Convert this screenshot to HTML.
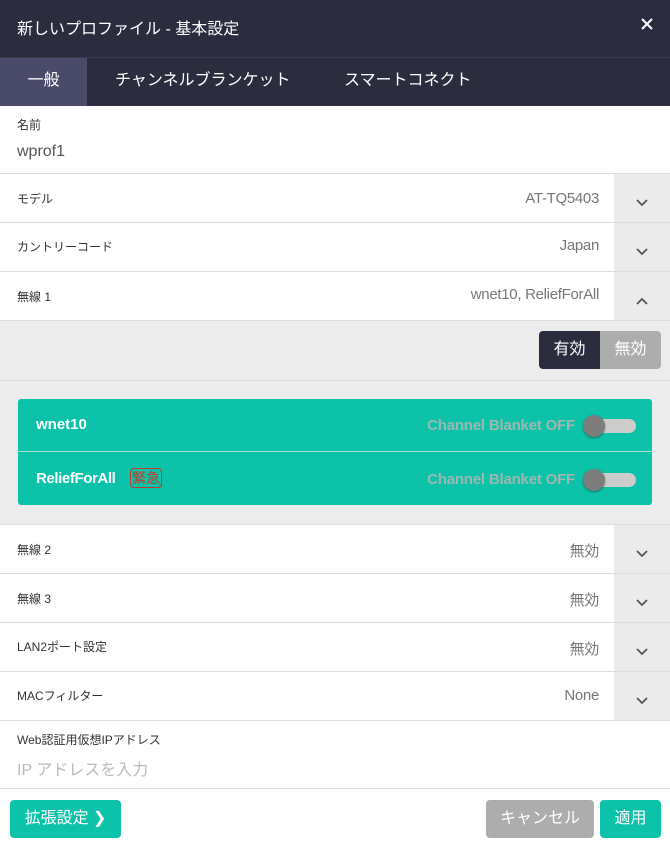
<!DOCTYPE html>
<html><head><meta charset="utf-8"><style>
*{box-sizing:border-box;margin:0;padding:0}
body{width:670px;height:849px;overflow:hidden;background:#fff;font-family:"Liberation Sans","Noto Sans CJK JP",sans-serif;position:relative}
.hdr{position:absolute;left:0;top:0;width:670px;height:57px;background:#2b2c3e;color:#fff;font-size:16px;padding:15px 0 0 17px}
.x{position:absolute;right:17px;top:17px}
.tabs{position:absolute;left:0;top:57px;width:670px;height:49px;background:#2b2c3e;border-top:1px solid #3a3b50}
.tab{position:absolute;top:0;height:49px;color:#fff;font-size:16px;line-height:46px}
.row{position:absolute;left:0;width:670px;border-bottom:1px solid #ddd;background:#fff}
.lbl{position:absolute;left:17px;font-size:12px;color:#333}
.val{position:absolute;right:71px;font-size:15px;color:#777;letter-spacing:-0.3px}
.chev{position:absolute;right:0;top:0;width:56px;height:100%;background:#ebebeb}
.chev svg{position:absolute;left:22px;top:25px}
.btn{position:absolute;height:38px;border-radius:4px;color:#fff;font-size:16px;line-height:38px;text-align:center}
.tog{position:absolute;right:16px;width:50px;height:14px;border-radius:7px;background:#ccc}
.tog:before{content:"";position:absolute;left:-3px;top:-4px;width:22px;height:22px;border-radius:50%;background:#7d7d7d;box-shadow:0 1px 2px rgba(0,0,0,.4)}
.cb{position:absolute;right:77px;font-size:15px;color:#9cb8b0;font-weight:bold;letter-spacing:-0.2px}
</style></head><body>
<div class="hdr">新しいプロファイル - 基本設定<span class="x"><svg width="12" height="12"><path d="M1 1l10 10M11 1L1 11" stroke="#fff" stroke-width="2"/></svg></span></div>
<div class="tabs">
<div class="tab" style="left:0;width:87px;background:#4a4b6a;text-align:center">一般</div>
<div class="tab" style="left:115px">チャンネルブランケット</div>
<div class="tab" style="left:344px">スマートコネクト</div>
</div>
<div class="row" style="top:106px;height:68px"><span class="lbl" style="top:10px">名前</span><span style="position:absolute;left:17px;top:37px;font-size:16px;color:#555">wprof1</span></div>

<div class="row" style="top:174px;height:49px"><span class="lbl" style="top:16px">モデル</span><span class="val" style="top:16px">AT-TQ5403</span><div class="chev"><svg width="12" height="8"><path d="M1 1l5 5 5-5" stroke="#555" stroke-width="1.8" fill="none"/></svg></div></div>
<div class="row" style="top:223px;height:49px"><span class="lbl" style="top:15px">カントリーコード</span><span class="val" style="top:14px">Japan</span><div class="chev"><svg width="12" height="8"><path d="M1 1l5 5 5-5" stroke="#555" stroke-width="1.8" fill="none"/></svg></div></div>
<div class="row" style="top:272px;height:49px"><span class="lbl" style="top:16px">無線 1</span><span class="val" style="top:14px">wnet10, ReliefForAll</span><div class="chev"><svg width="12" height="8"><path d="M1 7l5-5 5 5" stroke="#555" stroke-width="1.8" fill="none"/></svg></div></div>

<div style="position:absolute;top:321px;left:0;width:670px;height:60px;background:#ececec;border-bottom:1px solid #ddd"></div>
<div style="position:absolute;left:539px;top:331px;width:61px;height:38px;background:#2b2c3e;color:#fff;font-size:16px;line-height:38px;text-align:center;border-radius:4px 0 0 4px">有効</div>
<div style="position:absolute;left:600px;top:331px;width:61px;height:38px;background:#adadad;color:#fff;font-size:16px;line-height:38px;text-align:center;border-radius:0 4px 4px 0">無効</div>
<div style="position:absolute;top:381px;left:0;width:670px;height:144px;background:#ececec;border-bottom:1px solid #ddd"></div>
<div style="position:absolute;left:18px;top:399px;width:634px;height:106px;background:#0cc2a9;border-radius:3px">
 <div style="position:absolute;left:0;top:0;width:634px;height:53px;border-bottom:1px solid #a8e0d6">
  <span style="position:absolute;left:18px;top:17px;color:#fff;font-weight:bold;font-size:15px">wnet10</span>
  <span class="cb" style="top:18px">Channel Blanket OFF</span><div class="tog" style="top:20px"></div></div>
 <span style="position:absolute;left:18px;top:71px;color:#fff;font-weight:bold;font-size:15px;letter-spacing:-0.4px">ReliefForAll</span>
 <span style="position:absolute;left:112px;top:69px;border:1px solid #c0392b;border-radius:4px;color:#c0392b;font-size:14px;line-height:18px;padding:0 1px">緊急</span>
 <span class="cb" style="top:72px">Channel Blanket OFF</span><div class="tog" style="top:74px"></div>
</div>

<div class="row" style="top:525px;height:49px"><span class="lbl" style="top:16px">無線 2</span><span class="val" style="top:15px">無効</span><div class="chev"><svg width="12" height="8"><path d="M1 1l5 5 5-5" stroke="#555" stroke-width="1.8" fill="none"/></svg></div></div>
<div class="row" style="top:574px;height:49px"><span class="lbl" style="top:16px">無線 3</span><span class="val" style="top:15px">無効</span><div class="chev"><svg width="12" height="8"><path d="M1 1l5 5 5-5" stroke="#555" stroke-width="1.8" fill="none"/></svg></div></div>
<div class="row" style="top:623px;height:49px"><span class="lbl" style="top:15px">LAN2ポート設定</span><span class="val" style="top:15px">無効</span><div class="chev"><svg width="12" height="8"><path d="M1 1l5 5 5-5" stroke="#555" stroke-width="1.8" fill="none"/></svg></div></div>
<div class="row" style="top:672px;height:49px"><span class="lbl" style="top:15px">MACフィルター</span><span class="val" style="top:15px">None</span><div class="chev"><svg width="12" height="8"><path d="M1 1l5 5 5-5" stroke="#555" stroke-width="1.8" fill="none"/></svg></div></div>
<div class="row" style="top:721px;height:68px"><span class="lbl" style="top:10px">Web認証用仮想IPアドレス</span><span style="position:absolute;left:17px;top:35px;font-size:16px;color:#bbb">IP アドレスを入力</span></div>

<div class="btn" style="left:10px;top:800px;width:111px;background:#0cc2a9">拡張設定 ❯</div>
<div class="btn" style="left:486px;top:800px;width:108px;background:#adadad">キャンセル</div>
<div class="btn" style="left:600px;top:800px;width:61px;background:#0cc2a9">適用</div>
</body></html>
